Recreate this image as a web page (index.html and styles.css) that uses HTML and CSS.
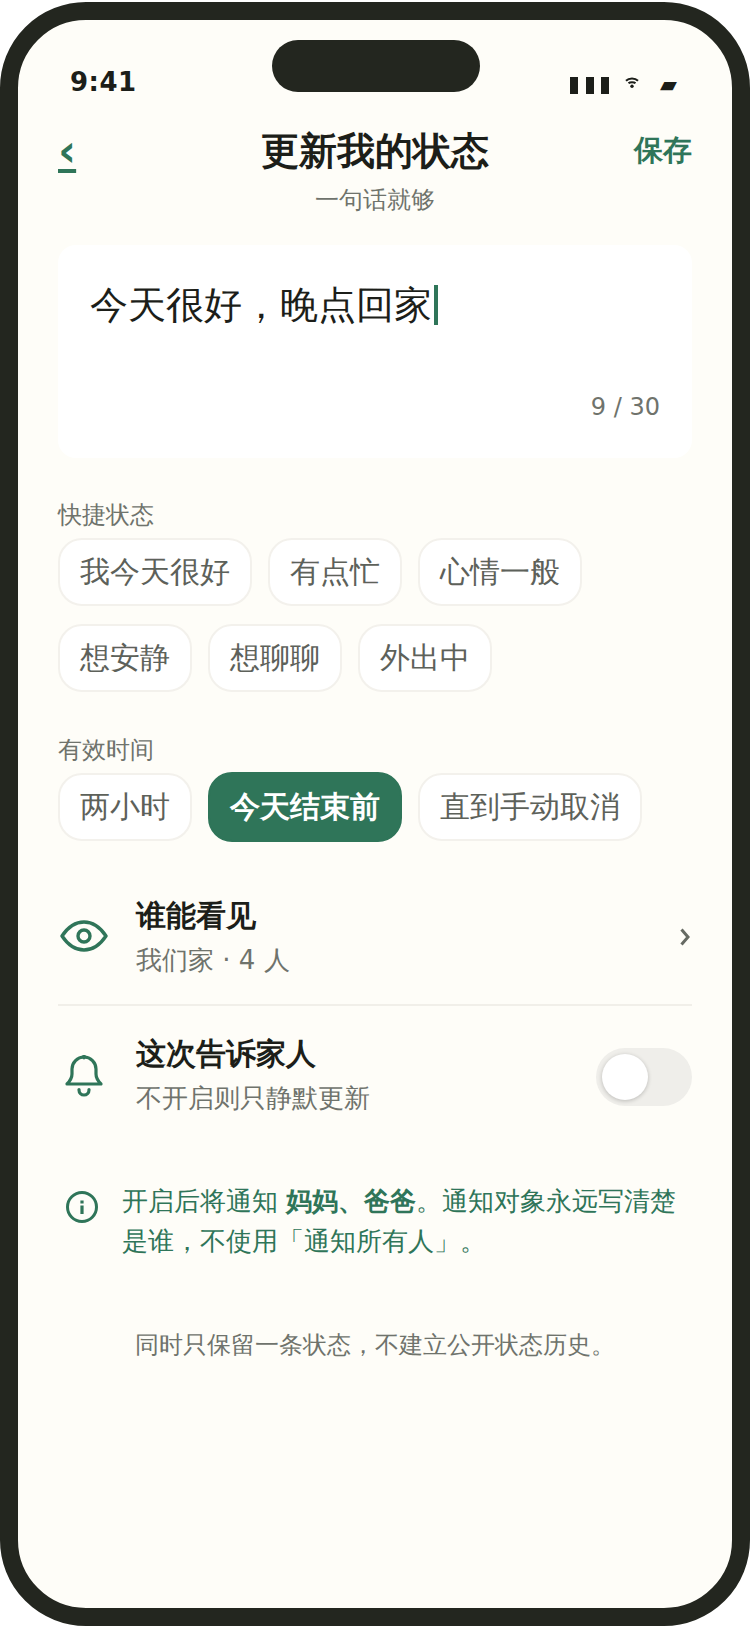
FILE: index.html
```html
<!DOCTYPE html>
<html>
<head>
<meta charset="utf-8">
<title>更新我的状态</title>
<link rel="stylesheet" href="styles.css">
</head>
<body>
<div class="phone">
  <div class="notch"></div>
  <div class="status">
    <span class="time">9:41</span>
    <span class="sys">
      <span class="bars"><i></i><i></i><i></i></span>
      <svg class="wifi" viewBox="0 0 14 11" width="14" height="11"><path d="M1 3.800C4 .8 10 .8 13 3.800M3.500 6.300C5 4.800 9 4.800 10.500 6.300" fill="none" stroke="#1c1e19" stroke-width="2"/><circle cx="7" cy="9.200" r="1.700" fill="#1c1e19"/></svg>
      <span class="batt">▰</span>
    </span>
  </div>
  <header class="head">
    <a class="back">‹</a>
    <div class="titles">
      <h1>更新我的状态</h1>
      <p>一句话就够</p>
    </div>
    <span class="save">保存</span>
  </header>
  <main class="content">
    <section class="card">
      <div class="input"><span>今天很好，晚点回家</span><i class="caret"></i></div>
      <div class="count">9 / 30</div>
    </section>
    <section class="group">
      <div class="label">快捷状态</div>
      <div class="chips">
        <span class="chip">我今天很好</span>
        <span class="chip">有点忙</span>
        <span class="chip">心情一般</span>
        <span class="chip">想安静</span>
        <span class="chip">想聊聊</span>
        <span class="chip">外出中</span>
      </div>
    </section>
    <section class="group second">
      <div class="label">有效时间</div>
      <div class="chips">
        <span class="chip">两小时</span>
        <span class="chip active">今天结束前</span>
        <span class="chip">直到手动取消</span>
      </div>
    </section>
    <section class="rows">
      <div class="row first">
        <svg class="icon" viewBox="0 0 48 36" width="48" height="36"><path d="M2 16C8 7 15 2 24 2s16 5 22 14c-6 9-13 14-22 14S8 25 2 16Z" fill="none" stroke="#2f7559" stroke-width="3.400" stroke-linejoin="round"/><circle cx="24" cy="16" r="6" fill="none" stroke="#2f7559" stroke-width="3.400"/></svg>
        <div class="row-text">
          <div class="row-title">谁能看见</div>
          <div class="row-sub">我们家 · 4 人</div>
        </div>
        <svg class="chev" viewBox="0 0 10 18" width="10" height="18"><path d="M1.500 1.500 8 9l-6.500 7.500" fill="none" stroke="#666a63" stroke-width="3"/></svg>
      </div>
      <div class="row second-row">
        <svg class="icon" viewBox="0 0 48 42" width="48" height="42"><path d="M7 29c3-3 5-6 5-10v-5a12 12 0 0 1 24 0v5c0 4 2 7 5 10Z" fill="none" stroke="#2f7559" stroke-width="3.200" stroke-linejoin="round"/><path d="M24 .8v2M19 34.500v.5a5 5 0 0 0 10 0v-.5" fill="none" stroke="#2f7559" stroke-width="3.200" stroke-linecap="round"/></svg>
        <div class="row-text">
          <div class="row-title">这次告诉家人</div>
          <div class="row-sub">不开启则只静默更新</div>
        </div>
        <div class="toggle"><div class="knob"></div></div>
      </div>
    </section>
    <section class="notice">
      <svg class="info" viewBox="0 0 34 34" width="34" height="34"><circle cx="17" cy="17" r="14.500" fill="none" stroke="#2f7559" stroke-width="3"/><rect x="15.400" y="15.500" width="3.200" height="8.500" fill="#2f7559"/><rect x="15.400" y="10.500" width="3.200" height="3" fill="#2f7559"/></svg>
      <p>开启后将通知 <b>妈妈、爸爸</b>。通知对象永远写清楚是谁，不使用「通知所有人」。</p>
    </section>
    <p class="foot">同时只保留一条状态，不建立公开状态历史。</p>
  </main>
</div>
</body>
</html>
```

FILE: styles.css
```css
* { box-sizing: border-box; }
html, body { margin: 0; padding: 0; background: #fff; }
body {
  width: 750px;
  height: 1626px;
  padding-top: 2px;
  font-family: "DejaVu Sans", sans-serif;
  overflow: hidden;
}
.phone {
  position: relative;
  width: 750px;
  height: 1624px;
  border: 18px solid #23261f;
  border-radius: 86px;
  background: #fefdf8;
  overflow: hidden;
}
.notch {
  position: absolute;
  top: 20px;
  left: 254px;
  width: 208px;
  height: 52px;
  border-radius: 26px;
  background: #23261f;
}
.status {
  display: flex;
  justify-content: space-between;
  align-items: center;
  height: 36px;
  margin-top: 42px;
  padding: 0 55px 0 52px;
}
.time {
  margin-top: 4px;
  font-size: 26px;
  font-weight: 700;
  letter-spacing: 0.5px;
  color: #1c1e19;
}
.sys { display: flex; align-items: center; gap: 16px; margin-top: 10px; color: #1c1e19; }
.bars { display: flex; gap: 7.5px; }
.bars i { display: block; width: 8px; height: 17px; background: #1c1e19; }
.batt { font-size: 22px; line-height: 1; margin-left: 5px; }
.wifi { display: block; margin-bottom: 5px; }
.head {
  display: grid;
  grid-template-columns: 80px 1fr 80px;
  margin-top: 23px;
  padding: 0 40px;
}
.back {
  justify-self: start;
  font-size: 44px;
  line-height: 60px;
  font-weight: 700;
  color: #2f7559;
  text-decoration: underline;
}
.titles { text-align: center; }
.titles h1 {
  margin: 0;
  font-size: 38px;
  line-height: 60px;
  font-weight: 700;
  color: #1c1e19;
}
.titles p {
  margin: 0;
  padding-top: 2px;
  font-size: 24px;
  line-height: 34px;
  color: #6f736c;
}
.save {
  justify-self: end;
  font-size: 29px;
  line-height: 58px;
  font-weight: 700;
  color: #2f7559;
}
.content { padding: 0 40px; }
.card {
  margin-top: 28px;
  height: 213px;
  padding: 33px 32px 0;
  border-radius: 18px;
  background: #fff;
}
.input {
  display: flex;
  align-items: center;
  height: 54px;
  font-size: 38px;
  color: #1c1e19;
}
.caret {
  display: block;
  width: 4px;
  height: 40px;
  margin-left: 2px;
  background: #2f7559;
}
.count {
  margin-top: 57px;
  text-align: right;
  font-size: 24px;
  line-height: 36px;
  color: #6f736c;
}
.group { margin-top: 42px; }
.group.second { margin-top: 43px; }
.label {
  font-size: 24px;
  line-height: 30px;
  color: #6f736c;
}
.chips {
  display: flex;
  flex-wrap: wrap;
  align-items: center;
  gap: 18px 16px;
  margin-top: 8px;
}
.chip {
  padding: 0 20px;
  height: 68px;
  line-height: 64px;
  font-size: 30px;
  color: #5d615a;
  background: #fff;
  border: 2px solid #f3f1ec;
  border-radius: 24px;
}
.chip.active {
  height: 70px;
  margin: -1px 0;
  line-height: 66px;
  font-weight: 700;
  color: #fff;
  background: #2f7559;
  border-color: #2f7559;
}
.rows { margin-top: 30px; }
.row {
  display: flex;
  align-items: center;
  height: 135px;
}
.row.second-row { height: 140px; }
.row.first { border-bottom: 2px solid #f1efe9; }
.icon { flex: none; margin: 0 28px 0 2px; }
.row-title {
  font-size: 30px;
  line-height: 44px;
  font-weight: 700;
  color: #1c1e19;
}
.row-text { flex: 1; }
.row-sub {
  font-size: 26px;
  line-height: 44px;
  color: #6f736c;
}
.chev { margin: 0 2px 2px 0; }
.toggle {
  position: relative;
  width: 96px;
  height: 58px;
  margin-top: 2px;
  border-radius: 29px;
  background: #efeeea;
}
.knob {
  position: absolute;
  top: 6px;
  left: 6px;
  width: 46px;
  height: 46px;
  border-radius: 50%;
  background: #fff;
  box-shadow: 0 1px 4px rgba(0, 0, 0, 0.22);
}
.notice {
  display: flex;
  gap: 23px;
  margin-top: 20px;
  padding-left: 7px;
}
.info { flex: none; margin-top: 24px; }
.notice p {
  margin: 0;
  padding-top: 15px;
  font-size: 26px;
  line-height: 40px;
  color: #2f7559;
}
.foot {
  margin: 67px 0 0;
  text-align: center;
  font-size: 24px;
  line-height: 34px;
  color: #6f736c;
}
```
